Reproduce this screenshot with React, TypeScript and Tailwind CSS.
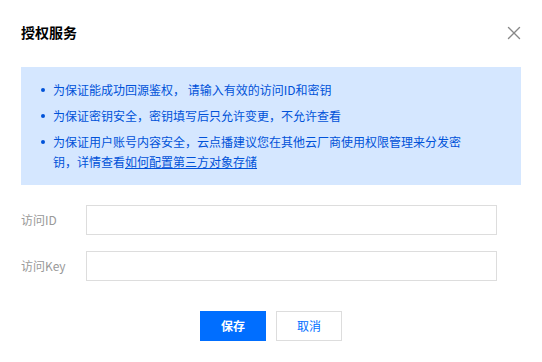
import { X } from 'lucide-react'

const TIPS = [
  '为保证能成功回源鉴权， 请输入有效的访问ID和密钥',
  '为保证密钥安全，密钥填写后只允许变更，不允许查看',
]

function Field({ label }: { label: string }) {
  return (
    <div className="flex items-center">
      <label className="w-[65px] text-[12px] text-[#999]">{label}</label>
      <input
        type="text"
        className="w-[411px] h-[30px] border border-[#ddd] bg-white px-2 text-[12px] outline-none"
      />
    </div>
  )
}

function Bullet() {
  return (
    <span className="w-[12px] h-[20px] flex items-center shrink-0">
      <span className="w-[4px] h-[4px] rounded-full bg-[#0052d9]" />
    </span>
  )
}

export default function App() {
  return (
    <div
      className="w-[542px] h-[362px] bg-white relative px-[21px] pt-[22px]"
      style={{ fontFamily: '"Microsoft YaHei", "Noto Sans CJK SC", "Noto Sans", sans-serif' }}
    >
      <div className="flex items-center justify-between h-[20px]">
        <h2 className="text-[14px] leading-[20px] font-bold text-[#000]">授权服务</h2>
        <button className="text-[#888] mr-[-4px] mt-[2px]">
          <X size={22} strokeWidth={1.5} />
        </button>
      </div>

      <div className="mt-[25px] w-[500px] bg-[#d5e7ff] pl-[20px] pt-[13px] pb-[13px]">
        <ul className="flex flex-col gap-[6px] text-[12px] leading-[20px] text-[#0052d9]">
          {TIPS.map((t) => (
            <li key={t} className="flex">
              <Bullet />
              <span className="w-[418px]">{t}</span>
            </li>
          ))}
          <li className="flex">
            <Bullet />
            <span className="w-[418px]">
              为保证用户账号内容安全，云点播建议您在其他云厂商使用权限管理来分发密钥，详情查看
              <a href="#" className="underline">如何配置第三方对象存储</a>
            </span>
          </li>
        </ul>
      </div>

      <div className="mt-[20px] flex flex-col gap-[16px]">
        <Field label="访问ID" />
        <Field label="访问Key" />
      </div>

      <div className="mt-[30px] flex justify-center gap-[10px]">
        <button className="w-[66px] h-[30px] bg-[#006eff] text-white text-[12px] font-bold">保存</button>
        <button className="w-[66px] h-[30px] border border-[#ddd] bg-white text-[#006eff] text-[12px]">取消</button>
      </div>
    </div>
  )
}
